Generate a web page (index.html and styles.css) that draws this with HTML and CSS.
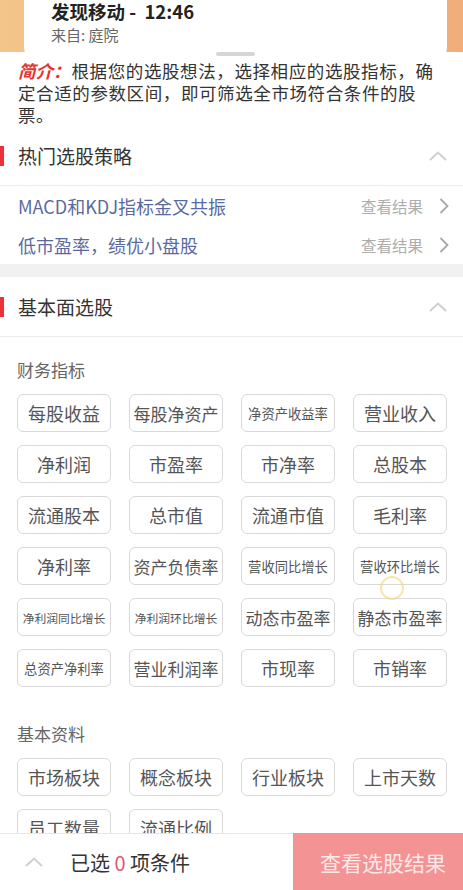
FILE: index.html
```html
<!DOCTYPE html>
<html lang="zh-CN">
<head>
    <meta charset="UTF-8">
    <meta name="viewport" content="width=device-width, initial-scale=1.0">
    <title>选股</title>
    <link rel="stylesheet" href="styles.css">
</head>
<body>
    <div class="notice-bg">
        <div class="notice">
            <div class="notice-title">发现移动 - &nbsp;12:46</div>
            <div class="notice-from">来自: 庭院</div>
            <span class="notice-handle"></span>
        </div>
    </div>

    <p class="intro"><em>简介：</em>根据您的选股想法，选择相应的选股指标，确定合适的参数区间，即可筛选全市场符合条件的股票。</p>

    <section class="panel">
        <div class="panel-head">
            <span class="panel-title">热门选股策略</span>
            <svg class="up" width="18" height="10" viewBox="0 0 18 10"><polyline points="1,9 9,1.5 17,9" fill="none" stroke="#cfcfcf" stroke-width="2"/></svg>
        </div>
        <div class="strategy">
            <span class="strategy-name">MACD和KDJ指标金叉共振</span>
            <span class="strategy-link">查看结果</span>
            <svg class="right" width="10" height="16" viewBox="0 0 10 16"><polyline points="1.5,1 8.5,8 1.5,15" fill="none" stroke="#a8a8a8" stroke-width="1.8"/></svg>
        </div>
        <div class="strategy">
            <span class="strategy-name">低市盈率，绩优小盘股</span>
            <span class="strategy-link">查看结果</span>
            <svg class="right" width="10" height="16" viewBox="0 0 10 16"><polyline points="1.5,1 8.5,8 1.5,15" fill="none" stroke="#a8a8a8" stroke-width="1.8"/></svg>
        </div>
    </section>

    <div class="gap"></div>

    <section class="panel">
        <div class="panel-head">
            <span class="panel-title">基本面选股</span>
            <svg class="up" width="18" height="10" viewBox="0 0 18 10"><polyline points="1,9 9,1.5 17,9" fill="none" stroke="#cfcfcf" stroke-width="2"/></svg>
        </div>

        <div class="group">
            <div class="group-title">财务指标</div>
            <div class="chips">
                <span class="chip">每股收益</span>
                <span class="chip md">每股净资产</span>
                <span class="chip sm">净资产收益率</span>
                <span class="chip">营业收入</span>
                <span class="chip">净利润</span>
                <span class="chip">市盈率</span>
                <span class="chip">市净率</span>
                <span class="chip">总股本</span>
                <span class="chip">流通股本</span>
                <span class="chip">总市值</span>
                <span class="chip">流通市值</span>
                <span class="chip">毛利率</span>
                <span class="chip">净利率</span>
                <span class="chip md">资产负债率</span>
                <span class="chip sm">营收同比增长</span>
                <span class="chip sm">营收环比增长</span>
                <span class="chip xs">净利润同比增长</span>
                <span class="chip xs">净利润环比增长</span>
                <span class="chip md">动态市盈率</span>
                <span class="chip md">静态市盈率</span>
                <span class="chip sm">总资产净利率</span>
                <span class="chip md">营业利润率</span>
                <span class="chip">市现率</span>
                <span class="chip">市销率</span>
            </div>
        </div>

        <div class="group">
            <div class="group-title">基本资料</div>
            <div class="chips">
                <span class="chip">市场板块</span>
                <span class="chip">概念板块</span>
                <span class="chip">行业板块</span>
                <span class="chip">上市天数</span>
                <span class="chip">员工数量</span>
                <span class="chip">流通比例</span>
            </div>
        </div>
    </section>

    <div class="footer">
        <div class="footer-left">
            <svg width="18" height="10" viewBox="0 0 18 10"><polyline points="1,9 9,1.5 17,9" fill="none" stroke="#cfcfcf" stroke-width="2"/></svg>
            <span class="picked">已选 <b>0</b> 项条件</span>
        </div>
        <button class="submit">查看选股结果</button>
    </div>

    <span class="touch"></span>
</body>
</html>
```

FILE: styles.css
```css
body {
    margin: 0;
    width: 463px;
    height: 890px;
    overflow: hidden;
    position: relative;
    background: #fff;
    font-family: "Noto Sans CJK SC", "Noto Sans", sans-serif;
    color: #333;
}
.notice-bg {
    height: 52px;
    background: linear-gradient(90deg, #f2c58a, #f0ad79);
    position: relative;
}
.notice {
    position: absolute;
    left: 24px;
    top: 0;
    width: 423px;
    height: 58px;
    background: #fff;
    border-radius: 0 0 10px 10px;
    padding-left: 27px;
    box-sizing: border-box;
}
.notice-title {
    font-size: 18.5px;
    font-weight: bold;
    line-height: 22px;
    color: #222;
}
.notice-from {
    font-size: 15px;
    line-height: 20px;
    margin-top: 3px;
    color: #666;
}
.notice-handle {
    position: absolute;
    left: 192px;
    top: 52px;
    width: 39px;
    height: 4px;
    border-radius: 2px;
    background: #d6d6d6;
}
.intro {
    margin: 0;
    padding: 8px 18px 0;
    height: 66px;
    font-size: 17.5px;
    line-height: 22px;
    color: #333;
    text-spacing-trim: space-all;
    letter-spacing: 0.6px;
}
.intro em {
    color: #e3342f;
    font-weight: bold;
    letter-spacing: 0;
    margin-right: 1px;
}
.panel-head {
    height: 59px;
    border-bottom: 1px solid #ececec;
    display: flex;
    align-items: center;
    justify-content: space-between;
    padding: 0 16px 0 18px;
    position: relative;
}
.panel-head::before {
    content: "";
    position: absolute;
    left: 0;
    top: 20px;
    width: 4px;
    height: 20px;
    background: #ef2f3a;
}
.panel-title {
    font-size: 19px;
    color: #333;
}
.strategy {
    height: 39px;
    display: flex;
    align-items: center;
    padding: 0 14px 0 18px;
}
.strategy-name {
    flex: 1;
    font-size: 18px;
    color: #5a6aa0;
}
.strategy-link {
    font-size: 15.5px;
    color: #adadad;
    margin-right: 16px;
}
.gap {
    height: 13px;
    background: #f1f1f1;
}
.group {
    padding: 21px 16px 14px 17px;
}
.group-title {
    font-size: 17px;
    line-height: 24px;
    color: #666;
    margin-bottom: 12px;
}
.chips {
    display: grid;
    grid-template-columns: repeat(4, 94px);
    column-gap: 18px;
    row-gap: 13px;
}
.chip {
    height: 38px;
    box-sizing: border-box;
    border: 1px solid #d9d9d9;
    border-radius: 6px;
    display: flex;
    align-items: center;
    justify-content: center;
    font-size: 18px;
    color: #555;
    white-space: nowrap;
}
.chip.md {
    font-size: 17px;
}
.chip.sm {
    font-size: 13.3px;
}
.chip.xs {
    font-size: 11.8px;
}
.footer {
    position: absolute;
    left: 0;
    right: 0;
    bottom: 0;
    height: 56px;
    border-top: 1px solid #e6e6e6;
    background: #fff;
    display: flex;
}
.footer-left {
    flex: 1;
    display: flex;
    align-items: center;
    padding-left: 25px;
    gap: 27px;
}
.picked {
    font-size: 20px;
    color: #333;
}
.picked b {
    font-weight: normal;
    color: #e4557a;
}
.submit {
    width: 170px;
    border: none;
    margin: -1px 0 0;
    background: #f39393;
    color: #fde9e9;
    font-family: inherit;
    font-size: 21px;
    padding: 0 0 0 10px;
}
.touch {
    position: absolute;
    left: 380px;
    top: 576px;
    width: 24px;
    height: 24px;
    border-radius: 50%;
    border: 2px solid rgba(240, 214, 120, 0.6);
    box-sizing: border-box;
}
```
